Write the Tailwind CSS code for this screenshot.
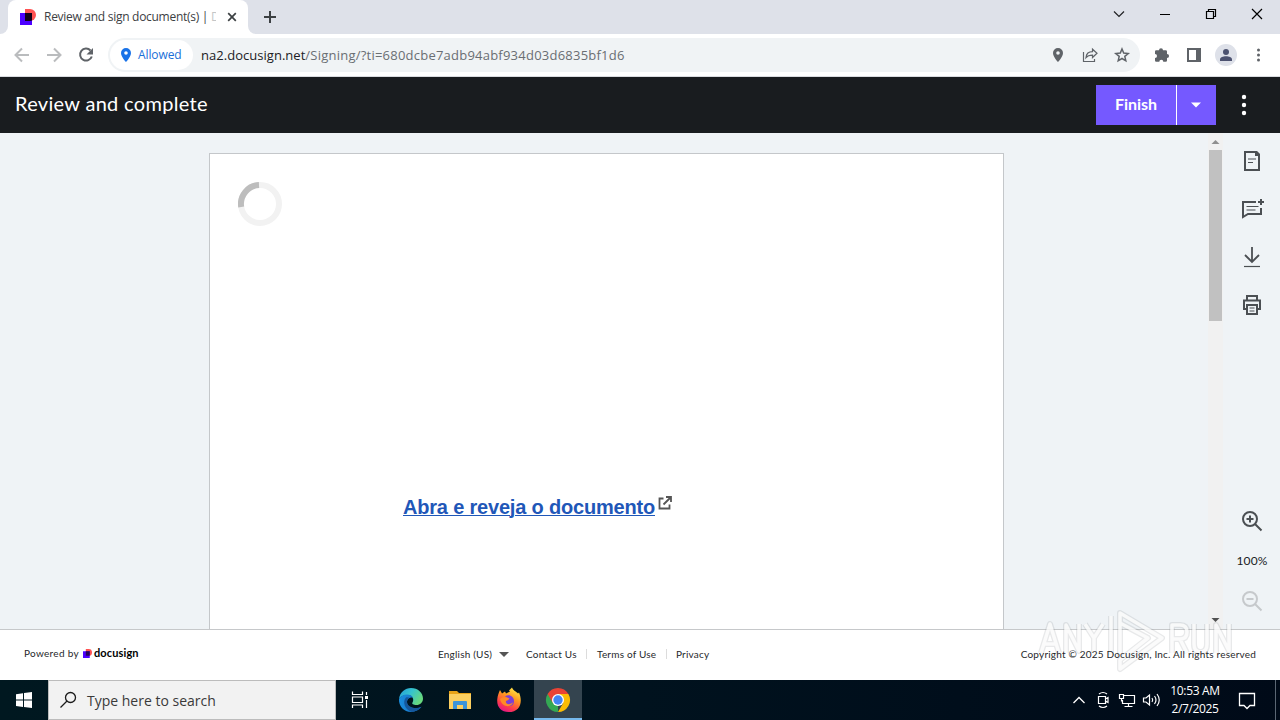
<!DOCTYPE html>
<html lang="en">
<head>
    <meta charset="UTF-8">
    <meta name="viewport" content="width=device-width, initial-scale=1.0">
    <title>Review and sign document(s) | Docusign</title>
    <script src="https://cdn.jsdelivr.net/npm/@tailwindcss/browser@4"></script>
</head>
<body class="w-[1280px] h-[720px] overflow-hidden flex flex-col bg-white font-['Open_Sans',sans-serif] whitespace-nowrap">

    <!-- Tab strip -->
    <div class="h-[34px] shrink-0 bg-[#dee1e9] flex items-start">
        <div class="w-2 h-[34px] bg-white"><div class="size-full bg-[#dee1e9] rounded-br-lg"></div></div>
        <div class="w-[240px] h-[34px] bg-white rounded-t-lg flex items-center pl-3">
            <svg class="size-4" viewBox="0 0 16 16">
                <path d="M5 0h5a6 6 0 0 1 0 12H5z" fill="#ff5252"/>
                <path d="M0 4h12v12H0z" fill="#4c00ff"/>
                <path d="M5 4h7v7.6q-1 .4-2 .4H5z" fill="#120016"/>
            </svg>
            <div class="w-[172px] ml-2 overflow-hidden text-[12px] text-[#3c4043] tracking-[-0.28px]">Review and sign document(s) | <span class="text-[#c4c6c8]">D</span></div>
            <svg class="size-4 ml-2" viewBox="0 0 16 16" fill="none" stroke="#3c4043" stroke-width="1.700"><path d="M4.200 4.200l7.600 7.600M11.800 4.200l-7.600 7.600"/></svg>
        </div>
        <div class="w-2 h-[34px] bg-white"><div class="size-full bg-[#dee1e9] rounded-bl-lg"></div></div>
        <svg class="size-7 mt-[3px]" viewBox="0 0 28 28" fill="none" stroke="#3c4043" stroke-width="2"><path d="M14 8v12M8 14h12"/></svg>
        <div class="ml-auto flex h-7">
            <svg class="w-[46px] h-7" viewBox="0 0 46 28" fill="none" stroke="#202124" stroke-width="1.200"><path d="M18 11.500l5 5 5-5"/></svg>
            <svg class="w-[46px] h-7" viewBox="0 0 46 28" fill="none" stroke="#000"><path d="M18 14.500h10"/></svg>
            <svg class="w-[46px] h-7" viewBox="0 0 46 28" fill="none" stroke="#000" stroke-width="1.200"><path d="M18.500 11.500h7v7h-7zM20.500 11.500v-2h7v7h-2"/></svg>
            <svg class="w-[46px] h-7" viewBox="0 0 46 28" fill="none" stroke="#000" stroke-width="1.200"><path d="M18 9l10 10M28 9L18 19"/></svg>
        </div>
    </div>

    <!-- Toolbar -->
    <div class="h-[43px] shrink-0 flex items-center px-[6px] border-b border-[#dadce0]">
        <svg class="w-8 h-5" viewBox="0 0 32 20" fill="none" stroke="#babcbe" stroke-width="2"><path d="M23 10H10M16 3.500L9.500 10l6.500 6.500"/></svg>
        <svg class="w-8 h-5" viewBox="0 0 32 20" fill="none" stroke="#babcbe" stroke-width="2"><path d="M9 10h13M16 3.500L22.500 10 16 16.500"/></svg>
        <svg class="w-8 h-5" viewBox="0 0 32 20" fill="none" stroke="#5f6368" stroke-width="2"><path d="M20.500 5.500a6 6 0 1 0 1.300 6"/><path d="M23 3v6.500h-6.500z" fill="#5f6368" stroke="none"/></svg>
        <div class="w-[1032px] h-[34px] ml-[6px] mr-[6px] rounded-full bg-[#f0f3f5] flex items-center px-[2px]">
            <div class="w-[83px] h-[30px] rounded-full bg-white flex items-center pl-[10px] gap-[6px] text-[12px] text-[#1a6fd8]">
                <svg class="w-3 h-4" viewBox="0 0 12 16"><path fill-rule="evenodd" fill="#1a73e8" d="M6 1a5 5 0 0 0-5 5c0 3.800 5 9 5 9s5-5.200 5-9a5 5 0 0 0-5-5zm0 3.200a1.800 1.800 0 1 1 0 3.600 1.800 1.800 0 0 1 0-3.600z"/></svg>
                <span class="tracking-[-0.1px]">Allowed</span>
            </div>
            <div class="ml-2 pt-px text-[13px] text-[#6a6e73] tracking-[0.23px]"><span class="text-[#202124] tracking-[0.03px]">na2.docusign.net</span>/Signing/?ti=680dcbe7adb94abf934d03d6835bf1d6</div>
            <div class="ml-auto flex">
                <svg class="w-8 h-4" viewBox="0 0 32 16"><path fill-rule="evenodd" fill="#5f6368" d="M16 1a5 5 0 0 0-5 5c0 3.800 5 9 5 9s5-5.200 5-9a5 5 0 0 0-5-5zm0 3.200a1.800 1.800 0 1 1 0 3.600 1.800 1.800 0 0 1 0-3.600z"/></svg>
                <svg class="w-8 h-4" viewBox="0 0 32 16" fill="none" stroke="#5f6368" stroke-width="1.200"><path d="M9.500 5v9.500h11V12M12 10.500c.4-4 2.500-5.800 6.500-5.800V2.200L23 6.300l-4.500 4.200V8.200c-3 0-5 .5-6.500 2.300z"/></svg>
                <svg class="w-8 h-4" viewBox="0 0 32 16" fill="none" stroke="#5f6368" stroke-width="1.500"><path d="M16 2l1.700 4.100 4.500.4-3.400 2.900 1 4.400-3.800-2.300-3.800 2.300 1-4.400-3.400-2.900 4.500-.4z"/></svg>
            </div>
        </div>
        <svg class="w-8 h-4" viewBox="0 0 32 16"><path fill="#5f6368" d="M9 4.500q0-1.300 1.300-1.300H13a2 2 0 0 1 4 0h2.700q1.300 0 1.300 1.300V7a2 2 0 0 1 0 4.100v2.400q0 1.300-1.300 1.300h-2.400a2 2 0 0 0-4 0h-3Q9 14.800 9 13.500v-2.600a2 2 0 0 0 0-4z"/></svg>
        <svg class="w-8 h-4" viewBox="0 0 32 16"><path d="M10 2h12v12H10z" fill="none" stroke="#5f6368" stroke-width="2"/><path d="M18 2h4v12h-4z" fill="#5f6368"/></svg>
        <svg class="w-8 h-6" viewBox="0 0 32 24"><circle cx="16" cy="12" r="11" fill="#dee1e9"/><circle cx="16" cy="9" r="3" fill="#4c5270"/><path fill="#4c5270" d="M10 18v-1.500c0-2 3-3.200 6-3.200s6 1.200 6 3.200V18z"/></svg>
        <svg class="w-8 h-4" viewBox="0 0 32 16" fill="#5f6368"><circle cx="16.500" cy="3" r="1.500"/><circle cx="16.500" cy="8" r="1.500"/><circle cx="16.500" cy="13" r="1.500"/></svg>
    </div>

    <!-- Signing header -->
    <div class="h-14 shrink-0 bg-[#191c1f] flex items-center pl-[15px] pr-2 font-['Lato',sans-serif] text-white">
        <div class="text-[20px] tracking-[0.31px] -mt-1">Review and complete</div>
        <div class="ml-auto flex gap-px h-10 bg-white">
            <div class="w-20 bg-[#7559ff] flex items-center justify-center text-[16px] font-bold pb-0.5">Finish</div>
            <div class="w-[39px] bg-[#7559ff] flex items-center pl-[14px]">
                <svg class="w-[10px] h-[6px]" viewBox="0 0 10 6"><path d="M0 .5h10L5 5.500z" fill="#fff"/></svg>
            </div>
        </div>
        <svg class="w-14 h-6" viewBox="0 0 56 24" fill="#fff"><circle cx="28" cy="4" r="2.200"/><circle cx="28" cy="12" r="2.200"/><circle cx="28" cy="20" r="2.200"/></svg>
    </div>

    <!-- Document area -->
    <div class="h-[496px] shrink-0 flex bg-[#eff3f6]">
        <div class="w-[1208px] pl-[209px] pt-5 overflow-hidden">
            <div class="w-[795px] h-[480px] bg-white border border-b-0 border-[#c4c7ca] pl-7 pt-7">
                <svg class="size-11" viewBox="0 0 44 44" fill="none" stroke-width="6">
                    <circle cx="22" cy="22" r="19" stroke="#f2f2f2"/>
                    <path d="M3.200 25A19 19 0 0 1 21 3" stroke="#bdbdbd"/>
                </svg>
                <div class="flex items-start mt-[269px] ml-[165px]">
                    <a href="#" class="font-['Liberation_Sans',Arial,sans-serif] font-bold text-[20px] leading-6 tracking-[-0.19px] text-[#1f57b8] underline decoration-1 underline-offset-1">Abra e reveja o documento</a>
                    <svg class="size-[14px] ml-[3px] mt-px" viewBox="0 0 14 14" fill="none" stroke="#555" stroke-width="1.800"><path d="M5.500 2.500H1.500v10h10v-4M8 1h5v5M13 1L5.500 8.500"/></svg>
                </div>
            </div>
        </div>
        <div class="w-[15px] bg-[#f1f1f1] flex flex-col items-center">
            <svg class="w-[15px] h-[17px]" viewBox="0 0 15 17"><path d="M3.500 11h8l-4-4z" fill="#8f8f8f"/></svg>
            <div class="w-[13px] h-[171px] bg-[#c1c1c1]"></div>
            <svg class="w-[15px] h-[17px] mt-auto" viewBox="0 0 15 17"><path d="M3.500 6h8l-4 4z" fill="#505050"/></svg>
        </div>
        <div class="flex-1 flex flex-col items-center py-1 pl-px text-[#4b4f53]">
            <svg class="size-12" viewBox="0 0 48 48" fill="none" stroke="currentColor" stroke-width="2"><path d="M17 15h11l3 3v15H17z"/><path d="M27 14h2l3 3v2h-5z" fill="currentColor" stroke="none"/><path d="M20 22h8M20 25.500h5" stroke-width="1.200"/></svg>
            <svg class="size-12" viewBox="0 0 48 48" fill="none" stroke="currentColor" stroke-width="2"><path d="M28 17H15v15l5-3h13v-6"/><path d="M33 14v6M30 17h6"/><path d="M18.500 21.500h12M18.500 25h9" stroke-width="1.200"/></svg>
            <svg class="size-12" viewBox="0 0 48 48" fill="none" stroke="currentColor" stroke-width="1.800"><path d="M24 14v15M17 22l7 7 7-7"/><path d="M16 33.500h16" stroke-width="1.200"/></svg>
            <svg class="size-12" viewBox="0 0 48 48" fill="none" stroke="currentColor" stroke-width="2"><path d="M19 19v-4h10v4M19 28h-3v-8.500h16V28h-3M19 24h10v9H19z"/><path d="M21.500 27h5M21.500 30h5" stroke-width="1.200"/></svg>
            <svg class="size-12 mt-auto" viewBox="0 0 48 48" fill="none" stroke="currentColor" stroke-width="2"><circle cx="22" cy="22" r="7"/><path d="M27 27l6.500 6.500M18.500 22h7M22 18.500v7"/></svg>
            <div class="h-8 flex items-center font-['Lato',sans-serif] text-[12px] tracking-[0.1px] text-[#191c1f]">100%</div>
            <svg class="size-12 text-[#c6c9cc]" viewBox="0 0 48 48" fill="none" stroke="currentColor" stroke-width="2"><circle cx="22" cy="22" r="7"/><path d="M27 27l6.500 6.500M18.500 22h7"/></svg>
        </div>
    </div>

    <!-- Footer -->
    <div class="relative h-[51px] shrink-0 bg-white border-t border-[#c6c8ca] flex items-center pl-6 pr-6 pb-0.5 font-['Lato',sans-serif] text-[10px] text-[#26282b]">
        <!-- Watermark -->
        <svg class="absolute left-[1036px] top-[-23px] w-[204px] h-[68px]" viewBox="0 0 204 68" fill="none" stroke-linejoin="round">
            <g stroke="#8b9095" stroke-opacity=".2" stroke-width="6">
                <path d="M5 46l9-29 9 29M9 37h10M30 46V18l13 26V17M49 17l9 14 9-14M58 31v15M136 46V18h8q7 0 7 7t-7 7h-8M144 32l7 14M158 17v20q0 8 6.500 8t6.500-8V17M180 46V18l13 26V17"/>
                <path d="M75 48V9M84 50V6l42 25-42 31V53l28-22-28-15"/>
            </g>
            <g stroke="#fff" stroke-opacity=".8" stroke-width="3.500">
                <path d="M5 46l9-29 9 29M9 37h10M30 46V18l13 26V17M49 17l9 14 9-14M58 31v15M136 46V18h8q7 0 7 7t-7 7h-8M144 32l7 14M158 17v20q0 8 6.500 8t6.500-8V17M180 46V18l13 26V17"/>
                <path d="M75 48V9M84 50V6l42 25-42 31V53l28-22-28-15"/>
            </g>
        </svg>
        <div class="w-[414px] flex items-center pb-0.5">
            <span class="w-[58px] tracking-[0.3px]">Powered by</span>
            <svg class="size-[9px] ml-px mr-[2px]" viewBox="0 0 16 16">
                <path d="M5 0h5a6 6 0 0 1 0 12H5z" fill="#ff5252"/>
                <path d="M0 4h12v12H0z" fill="#4c00ff"/>
                <path d="M5 4h7v7.600q-1 .4-2 .4H5z" fill="#260559"/>
            </svg>
            <span class="text-[11px] leading-3 font-bold text-black tracking-[0.12px]">docusign</span>
        </div>
        <div class="flex items-center">
            <span class="w-[61px] tracking-[0.2px]">English (US)</span>
            <svg class="w-[10px] h-[5px] mr-[17px]" viewBox="0 0 10 5"><path d="M0 0h10L5 5z" fill="#555"/></svg>
            <span class="w-[60px] tracking-[0.2px]">Contact Us</span>
            <span class="w-[11px] h-[10px] border-l border-[#dcdcdc]"></span>
            <span class="w-[69px] tracking-[0.2px]">Terms of Use</span>
            <span class="w-[10px] h-[10px] border-l border-[#dcdcdc]"></span>
            <span class="tracking-[0.2px]">Privacy</span>
        </div>
        <div class="relative ml-auto tracking-[0.2px]">Copyright © 2025 Docusign, Inc. All rights reserved</div>
    </div>

    <!-- Taskbar -->
    <div class="h-10 shrink-0 flex items-center bg-linear-to-r from-[#001820] via-[#00121e] to-[#000a18]">
        <svg class="w-12 h-10" viewBox="0 0 48 40" fill="#fff"><path d="M16 14.200l7-1v6.400h-7zM24 13l8-1v7.600h-8zM16 20.500h7V27l-7-1zM24 20.500h8V28l-8-1z"/></svg>
        <div class="w-[288px] h-10 bg-[#f2f2f2] border border-[#bcbcbc] flex items-center pl-[10px] text-[14px] text-[#3a3a3a]">
            <svg class="size-5" viewBox="0 0 20 20" fill="none" stroke="#1b1b1b" stroke-width="1.300"><circle cx="11.500" cy="7.500" r="5"/><path d="M8 11l-6.500 6.500"/></svg>
            <span class="ml-2">Type here to search</span>
        </div>
        <svg class="w-12 h-10 mr-[3px]" viewBox="0 0 48 40" fill="none" stroke="#fff" stroke-width="1.200"><path d="M16.500 11.500v3h10v-3M16.500 28v-3h10v3M16.500 17h10v5.500h-10zM30.500 12v3M30.500 20v8"/><path d="M29 16h3v3h-3z" fill="#fff" stroke="none"/></svg>
        <div class="flex h-10 gap-px">
            <svg class="w-12 h-10" viewBox="0 0 48 40">
                <defs>
                    <linearGradient id="edgeTop" x1="0" x2="1" y1="0" y2=".5"><stop offset="0" stop-color="#249bd8"/><stop offset=".5" stop-color="#35c3cf"/><stop offset="1" stop-color="#67d97e"/></linearGradient>
                    <linearGradient id="edgeLow" x1="0" x2="1"><stop offset="0" stop-color="#1a8ee0"/><stop offset="1" stop-color="#1569b8"/></linearGradient>
                </defs>
                <path d="M12 19c1-7 6-11 12-11 7 0 12 5 12 10.500 0 4-3 6.500-6.500 6.500-3 0-5-1-4-2.500 2-3 0-7.500-5-7.500-4 0-7 1.500-8.500 4z" fill="url(#edgeTop)"/>
                <path d="M12 19c1.500-3 4.500-4.500 8-4.500 3 0 5 1 6 3-4-.5-6 2-6 4.500 0 4 4 6.500 8.500 6.500 2.500 0 4.500-1 6-1.700C32 30 28.500 32 24 32c-7 0-12.500-6-12-13z" fill="url(#edgeLow)"/>
                <path d="M19 17.500c-4 4-1 13 6 14.400 4-.4 7-2.400 9.500-5.100-6 3-14.500.2-14.500-4.800 0-2 1-3.500 2.500-4.200-1-.7-2.500-.8-3.500-.3z" fill="#15579c"/>
            </svg>
            <svg class="w-12 h-10" viewBox="0 0 48 40"><path d="M13 11h8l2 2h12v3H13z" fill="#e8a317"/><path d="M13 14h22v15H13z" fill="#fbcf60"/><path d="M17 29v-7q0-1 1-1h12q1 0 1 1v7h-4v-4h-6v4z" fill="#3b94d9"/></svg>
            <svg class="w-12 h-10" viewBox="0 0 48 40">
                <defs><linearGradient id="fox" x1=".8" y1="0" x2=".3" y2="1"><stop offset="0" stop-color="#fff04d"/><stop offset=".4" stop-color="#ff9a1f"/><stop offset=".75" stop-color="#ff3d4a"/><stop offset="1" stop-color="#e31587"/></linearGradient></defs>
                <path d="M15 10l2 3.500 3-2 1 2 4-2-1-1c1-1 2-2 3-3 1 3 4.500 4 6 6l1-1c4 9 1.500 19.500-10.500 19.500C16 32 11.500 27 12.300 19c.3-3.500 1.500-6.500 2.700-9z" fill="url(#fox)"/>
                <path d="M20 16.500c4-3 9 0 9 4.500s-3 5.500-6 5-5-3-4.500-6l4 .5 2-2z" fill="#7c3fd6"/>
                <path d="M15 19c2-2 4-2 7-1l2 1-3 2c-1 4 5 4 7 1-1 6-11 6-13-3z" fill="#ff8a26"/>
            </svg>
            <div class="w-12 h-10 bg-[#34444f] border-b-2 border-[#76b9ed]">
                <svg class="w-12 h-10" viewBox="0 0 48 40">
                    <path d="M24 32A12 12 0 0 1 13.600 14L24 20z" fill="#34a853"/>
                    <path d="M24 14h10.400a12 12 0 0 0-20.800 0l5.200 9 .2-6z" fill="#ea4335"/>
                    <path d="M29.200 23L24 32a12 12 0 0 0 10.400-18H24z" fill="#fbbc04"/>
                    <circle cx="24" cy="20" r="6" fill="#fff"/><circle cx="24" cy="20" r="4.700" fill="#4285f4"/>
                </svg>
            </div>
        </div>
        <div class="ml-auto flex items-center text-white">
            <svg class="w-6 h-6" viewBox="0 0 24 24" fill="none" stroke="#fff" stroke-width="1.300"><path d="M6.500 15l5.500-5.500 5.500 5.500"/></svg>
            <svg class="w-6 h-6" viewBox="0 0 24 24" fill="none" stroke="#fff" stroke-width="1.200"><path d="M7.500 8.500h7v7h-7zM14.500 11l2.500-1.500v5L14.500 13M8 6q4-3 8 0M8 18q4 3 8 0"/></svg>
            <svg class="w-6 h-6" viewBox="0 0 24 24" fill="none" stroke="#fff" stroke-width="1.200"><path d="M8.500 7.500h11v8h-12V12M13.500 15.500v3M9.500 18.500h8M4.500 6.500h4v4h-4zM6.500 10.500v3"/></svg>
            <svg class="w-6 h-6" viewBox="0 0 24 24" fill="none" stroke="#fff" stroke-width="1.200"><path d="M4.500 10v4H7l3.500 3V7L7 10zM13 10q1.500 2 0 4M15.500 8q3 4 0 8M18 6q4.500 6 0 12"/></svg>
            <div class="w-[62px] pl-0.5 text-center text-[12px] leading-[18px] tracking-[-0.35px]">10:53 AM<br>2/7/2025</div>
            <svg class="w-11 h-10" viewBox="0 0 44 40" fill="none" stroke="#fff" stroke-width="1.300"><path d="M14.500 13.500h15v12H25l-3 3-3-3h-4.500z"/></svg>
            <div class="w-[5px] h-10 ml-[6px] border-l border-[#5b6673]"></div>
        </div>
    </div>

</body>
</html>
